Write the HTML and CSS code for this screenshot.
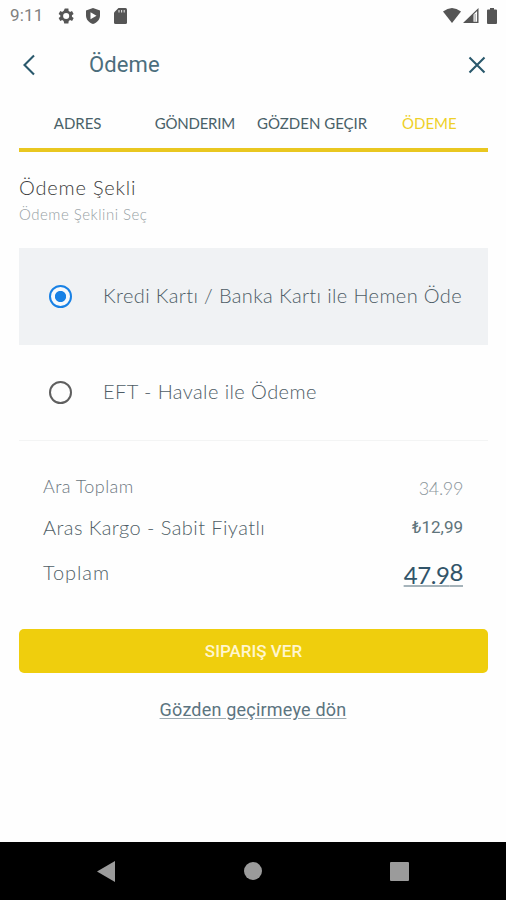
FILE: index.html
```html
<!DOCTYPE html>
<html lang="tr">
<head>
<meta charset="utf-8">
<title>Ödeme</title>
<link rel="stylesheet" href="styles.css">
</head>
<body>
<div class="screen">
  <div class="status">
    <span class="clock">9:11</span>
    <svg class="gear" width="16" height="16" viewBox="2 2 20 20"><path fill="#555" fill-rule="evenodd" d="M19.4 13a7.5 7.5 0 0 0 0-2l2.1-1.600-2-3.500-2.500 1a7.500 7.500 0 0 0-1.700-1L15 2.500h-4.500L9 5.900a7.500 7.500 0 0 0-1.700 1l-2.500-1-2 3.500L4.900 11a7.500 7.500 0 0 0 0 2l-2.100 1.600 2 3.500 2.500-1a7.500 7.500 0 0 0 1.700 1l.8 3.400H15l.4-3.400a7.500 7.500 0 0 0 1.700-1l2.500 1 2-3.500zM12.200 15.800a3.800 3.800 0 1 1 0-7.600 3.800 3.800 0 0 1 0 7.600z"/></svg>
    <svg class="shield" width="14" height="16" viewBox="0 0 14 16"><path fill="#555" d="M7 0l7 2.500v5c0 4-3 7.300-7 8.500-4-1.200-7-4.500-7-8.500v-5z"/><path fill="#fff" d="M4.500 4.300l6 3.500-6 3.500z"/></svg>
    <svg class="sd" width="13" height="16" viewBox="0 0 13 16"><path fill="#555" d="M4.500 0H11.500Q13 0 13 1.500v13Q13 16 11.500 16h-10Q0 16 0 14.500v-10z"/><path stroke="#ddd" stroke-width="1.100" d="M5 2v2.500M7.600 2v2.500M10.200 2v2.500"/></svg>
    <span class="grow"></span>
    <svg class="wifi" width="18" height="15" viewBox="0 0 18 15"><path fill="#555" d="M0 3.500Q9-3.500 18 3.500L9 15z"/></svg>
    <svg class="signal" width="16" height="15" viewBox="0 0 16 15"><path fill="#555" fill-rule="evenodd" d="M0 15L15.500 0v15zM10.500 6.500v7.300h3.600V3z"/><path fill="#999" d="M11.600 6h1v7.800h-1z"/></svg>
    <svg class="battery" width="10" height="16" viewBox="0 0 10 16"><path fill="#555" d="M3 0h4v1.500h2q1 0 1 1V15q0 1-1 1H1q-1 0-1-1V2.500q0-1 1-1h2z"/></svg>
  </div>
  <header class="header">
    <svg class="back" width="14" height="22" viewBox="0 0 14 22"><path d="M12 1.500L2.500 11 12 20.500"/></svg>
    <h1>Ödeme</h1>
    <svg class="close" width="18" height="18" viewBox="0 0 18 18"><path d="M1.500 1.500l15 15M16.500 1.500l-15 15"/></svg>
  </header>
  <nav class="tabs">
    <span>ADRES</span><span class="narrow">GÖNDERIM</span><span>GÖZDEN GEÇIR</span><span class="active">ÖDEME</span>
  </nav>
  <section class="intro">
    <h2>Ödeme Şekli</h2>
    <p>Ödeme Şeklini Seç</p>
  </section>
  <div class="option selected"><i class="radio"></i><span>Kredi Kartı / Banka Kartı ile Hemen Öde</span></div>
  <div class="option"><i class="radio"></i><span>EFT - Havale ile Ödeme</span></div>
  <div class="summary">
    <div class="row sub"><span>Ara Toplam</span><span class="amount">34.99</span></div>
    <div class="row ship"><span>Aras Kargo - Sabit Fiyatlı</span><span class="amount">₺12,99</span></div>
    <div class="row total"><span>Toplam</span><span class="amount">47.9<span class="raised">8</span></span></div>
  </div>
  <div class="order">SIPARIŞ VER</div>
  <div class="return"><a>Gözden geçirmeye dön</a></div>
  <footer class="navbar">
    <svg width="18" height="21" viewBox="0 0 18 21"><path fill="#9b9b9b" d="M0 10.500L18 0v21z"/></svg>
    <svg width="18" height="18" viewBox="0 0 18 18"><circle cx="9" cy="9" r="9" fill="#9b9b9b"/></svg>
    <svg width="19" height="19" viewBox="0 0 19 19"><rect width="19" height="19" rx="1" fill="#9b9b9b"/></svg>
  </footer>
</div>
</body>
</html>
```
FILE: styles.css
```css
* { box-sizing: border-box; margin: 0; padding: 0; }
body { width: 506px; height: 900px; background: #fefefe; font-family: Lato, sans-serif; overflow: hidden; }
svg { display: block; flex: none; }
.screen { display: flex; flex-direction: column; height: 900px; white-space: nowrap; }
.status { display: flex; align-items: center; height: 31px; padding: 0 9px 0 10px; font: 17px/31px Roboto, sans-serif; color: #808080; }
.clock { width: 48px; letter-spacing: .15px; }
.shield { margin-left: 12px; }
.sd { margin-left: 14px; }
.grow { flex: 1; }
.wifi { margin-right: 2px; }
.battery { margin-left: 8px; }
.header { display: flex; align-items: center; height: 67px; padding: 0 20px 0 22px; }
.header svg { fill: none; stroke: #29586c; stroke-width: 2.1; }
.header h1 { flex: 1; margin-left: 53px; font: 400 22px/30px Roboto, sans-serif; letter-spacing: .1px; color: #4c6e7d; }
.tabs { display: grid; grid-template-columns: repeat(4, 117.25px); align-items: center; height: 54px; margin: 0 18px 0 19px; padding-bottom: 1px; border-bottom: 4px solid #e9c720; text-align: center; font-size: 15px; color: #496168; }
.tabs .narrow { letter-spacing: -.25px; }
.tabs .active { color: #eed028; }
.intro { height: 96px; padding: 21px 19px 0; }
.intro h2 { font-size: 20px; line-height: 28px; font-weight: 300; letter-spacing: .8px; color: #3c3c3c; }
.intro p { margin-top: 1px; font-size: 15px; line-height: 24px; font-weight: 300; letter-spacing: .5px; color: #969ea4; }
.option { display: flex; align-items: center; height: 96px; margin: 0 18px 0 19px; padding-left: 30px; border-bottom: 1px solid #f3f4f4; font-size: 20px; font-weight: 300; letter-spacing: .42px; color: #4e5d66; }
.option.selected { height: 97px; background: #f0f2f4; border: 0; letter-spacing: .37px; }
.option span { padding-bottom: 3px; }
.radio { width: 23px; height: 23px; margin-right: 31px; border: 2.5px solid #5f5f5f; border-radius: 50%; }
.selected .radio { border-color: #1881e5; background: radial-gradient(circle, #1881e5 5.2px, #f6f9fc 6px); }
.summary { height: 188px; padding: 24px 43px 0; }
.row { display: flex; justify-content: space-between; height: 42px; line-height: 41px; color: #505e67; font-weight: 300; font-size: 20px; letter-spacing: .44px; }
.sub { font-size: 18px; line-height: 42px; color: #6b767e; }
.sub .amount { padding-top: 2px; letter-spacing: -.35px; color: #8b959b; }
.ship .amount { font: 400 17px/41px Roboto, sans-serif; letter-spacing: 0; color: #5e747b; }
.total { height: 48px; line-height: 47px; letter-spacing: .9px; }
.total .amount { font-size: 24px; font-weight: 400; line-height: 52px; letter-spacing: -.4px; color: #315469; text-decoration: underline; text-decoration-color: #a5b3ba; text-decoration-thickness: 2px; text-underline-offset: 1px; }
.raised { position: relative; top: -3px; }
.order { height: 44px; margin: 0 18px 0 19px; border-radius: 5px; background: #efce0d; text-align: center; font: 500 17px/44px Roboto, sans-serif; color: #fff6cf; }
.return { flex: 1; padding-top: 22px; text-align: center; font: 400 18px/30px Roboto, sans-serif; letter-spacing: .2px; color: #5b7480; }
.return a { text-decoration: underline; text-decoration-color: #9dabb2; text-underline-offset: 2px; }
.navbar { display: flex; justify-content: space-between; align-items: center; height: 58px; padding: 0 97px; background: #000; }
```
